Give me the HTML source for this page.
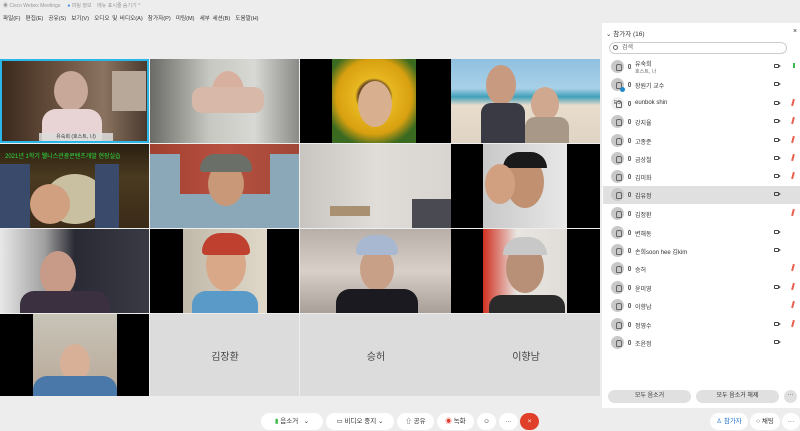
<!DOCTYPE html>
<html><head><meta charset="utf-8"><style>
*{margin:0;padding:0;box-sizing:border-box}
body{width:800px;height:431px;background:#ededed;font-family:"Liberation Sans","Noto Sans CJK KR",sans-serif;position:relative;overflow:hidden;color:#333}
.a{position:absolute}
.t{position:absolute;overflow:hidden}
.f{position:absolute;border-radius:50%}
.row{position:absolute;left:603px;width:197px;height:18px;font-size:6px;color:#333}
.av{position:absolute;left:8px;top:2px;width:13px;height:13px;border-radius:50%;background:#c8c8c8}
.av:after{content:"";position:absolute;left:4.5px;top:3.5px;width:4px;height:5px;border:1px solid #666;border-radius:2px 2px 1px 1px}
.mi{position:absolute;left:25px;top:6px;width:3px;height:5px;border:1px solid #666;border-radius:2px}
.nm{position:absolute;left:32px;top:5px}
.cam{position:absolute;left:171px;top:6px;width:5px;height:4px;border:1px solid #444;border-radius:1px}
.cam:after{content:"";position:absolute;left:4px;top:0;border-left:2px solid #444;border-top:1px solid transparent;border-bottom:1px solid transparent}
.rm{position:absolute;left:189px;top:4px;width:2px;height:7px;background:#e8604c;transform:rotate(15deg)}
.btn{position:absolute;top:413px;height:17px;background:#fff;border-radius:9px;font-size:6.5px;line-height:17px;text-align:center;color:#333}
.nt{position:absolute;width:150px;text-align:center;font-size:10px;color:#444;top:348px}
</style></head><body>
<div class="a" style="left:3px;top:2px;font-size:5px;color:#999">◉ Cisco Webex Meetings &nbsp;&nbsp;&nbsp; <span style="color:#3a8de0">●</span> 미팅 정보 &nbsp;&nbsp; 메뉴 표시줄 숨기기 ^</div>
<div class="a" style="left:3px;top:14px;font-size:5.6px;color:#333;word-spacing:1px;white-space:nowrap">파일(F) &nbsp;편집(E) &nbsp;공유(S) &nbsp;보기(V) &nbsp;오디오 및 비디오(A) &nbsp;참가자(P) &nbsp;미팅(M) &nbsp;세부 세션(B) &nbsp;도움말(H)</div>

<!-- row1 -->
<div class="t" style="left:0;top:59px;width:149px;height:84px;background:linear-gradient(90deg,#3b2a1e,#6b5240 40%,#8a7360 70%,#4a3a2e);border:2px solid #29b6e8">
<div class="a" style="left:110px;top:10px;width:34px;height:40px;background:#b8a89a"></div>
<div class="f" style="left:52px;top:10px;width:34px;height:40px;background:#c8a898"></div>
<div class="a" style="left:40px;top:48px;width:60px;height:40px;background:#e8d4d4;border-radius:14px 14px 0 0"></div>
<div class="a" style="left:37px;top:72px;width:74px;height:9px;background:rgba(220,220,220,.85);font-size:5px;text-align:center;line-height:9px">유숙희 (호스트, 나)</div></div>
<div class="t" style="left:150px;top:59px;width:149px;height:84px;background:linear-gradient(90deg,#6a6a66,#c8c8c2 40%,#d8d8d4 70%,#8a8a86)">
<div class="f" style="left:62px;top:12px;width:32px;height:42px;background:#d8b0a0"></div>
<div class="a" style="left:42px;top:28px;width:72px;height:26px;background:#d8b8a8;border-radius:10px"></div></div>
<div class="t" style="left:300px;top:59px;width:151px;height:84px;background:#000">
<div class="a" style="left:32px;top:0;width:84px;height:84px;background:radial-gradient(circle at 50% 45%,#6a4a20 25%,#e8b820 30%,#d8a010 60%,#3a6a20 80%)"></div>
<div class="f" style="left:58px;top:22px;width:34px;height:46px;background:#d8b090"></div></div>
<div class="t" style="left:451px;top:59px;width:149px;height:84px;background:linear-gradient(180deg,#90c0e0 0,#a8d0e8 35%,#40a0b8 45%,#e8dccc 55%,#e0d4c4)">
<div class="f" style="left:35px;top:6px;width:30px;height:40px;background:#c89a80"></div>
<div class="a" style="left:30px;top:44px;width:44px;height:40px;background:#3a3a44;border-radius:10px 10px 0 0"></div>
<div class="f" style="left:80px;top:28px;width:28px;height:34px;background:#d0a890"></div>
<div class="a" style="left:74px;top:58px;width:44px;height:30px;background:#a89888;border-radius:10px 10px 0 0"></div></div>
<!-- row2 -->
<div class="t" style="left:0;top:144px;width:149px;height:84px;background:linear-gradient(180deg,#2a2010,#4a3a20 40%,#3a2a18)">
<div class="a" style="left:5px;top:7px;font-size:6px;color:#2ce040;white-space:nowrap">2021년 1학기 웰니스관광콘텐츠개발 현장실습</div>
<div class="f" style="left:45px;top:30px;width:60px;height:50px;background:#c8c0a0"></div>
<div class="f" style="left:30px;top:40px;width:40px;height:40px;background:#d0a080"></div>
<div class="a" style="left:0;top:20px;width:30px;height:64px;background:#3a4a6a"></div>
<div class="a" style="left:95px;top:20px;width:24px;height:64px;background:#3a4a6a"></div></div>
<div class="t" style="left:150px;top:144px;width:149px;height:84px;background:linear-gradient(90deg,#a04030,#b85040 50%,#a04838)">
<div class="a" style="left:0;top:50px;width:149px;height:34px;background:#8aa8b8"></div>
<div class="f" style="left:58px;top:18px;width:36px;height:44px;background:#c89878"></div>
<div class="a" style="left:50px;top:10px;width:52px;height:18px;background:#6a7068;border-radius:20px 20px 4px 4px"></div>
<div class="a" style="left:0;top:10px;width:30px;height:74px;background:#8aa8b8"></div>
<div class="a" style="left:120px;top:10px;width:29px;height:74px;background:#8aa8b8"></div></div>
<div class="t" style="left:300px;top:144px;width:151px;height:84px;background:linear-gradient(90deg,#c8c4c0,#e0dcd8 50%,#d8d4d0)">
<div class="a" style="left:112px;top:55px;width:39px;height:29px;background:#4a4a52"></div>
<div class="a" style="left:30px;top:62px;width:40px;height:10px;background:#a89070"></div></div>
<div class="t" style="left:451px;top:144px;width:149px;height:84px;background:#000">
<div class="a" style="left:32px;top:0;width:84px;height:84px;background:linear-gradient(90deg,#c8c8c8,#e8e8e8)"></div>
<div class="f" style="left:55px;top:12px;width:38px;height:52px;background:#c09070"></div>
<div class="a" style="left:52px;top:8px;width:44px;height:16px;background:#1a1a1a;border-radius:20px 20px 0 0"></div>
<div class="f" style="left:34px;top:20px;width:30px;height:40px;background:#d0a080"></div></div>
<!-- row3 -->
<div class="t" style="left:0;top:229px;width:149px;height:84px;background:linear-gradient(90deg,#e8e8e8,#a0a0a0 30%,#2a2a34 50%,#3a3a44)">
<div class="f" style="left:40px;top:22px;width:36px;height:46px;background:#c89a88"></div>
<div class="a" style="left:20px;top:62px;width:90px;height:22px;background:#3a3040;border-radius:14px 14px 0 0"></div></div>
<div class="t" style="left:150px;top:229px;width:149px;height:84px;background:#000">
<div class="a" style="left:33px;top:0;width:84px;height:84px;background:linear-gradient(90deg,#c0b8a8,#e0d8c8)"></div>
<div class="f" style="left:56px;top:10px;width:40px;height:52px;background:#d8a888"></div>
<div class="a" style="left:52px;top:4px;width:48px;height:22px;background:#c04030;border-radius:20px 20px 4px 4px"></div>
<div class="a" style="left:42px;top:62px;width:66px;height:22px;background:#5a9ac8;border-radius:14px 14px 0 0"></div></div>
<div class="t" style="left:300px;top:229px;width:151px;height:84px;background:linear-gradient(180deg,#b8b0a8,#d8d0c8 50%,#a8a098)">
<div class="f" style="left:60px;top:18px;width:34px;height:44px;background:#c8a088"></div>
<div class="a" style="left:56px;top:6px;width:42px;height:20px;background:#a8b8d0;border-radius:20px 20px 4px 4px"></div>
<div class="a" style="left:36px;top:60px;width:82px;height:24px;background:#1a1a20;border-radius:14px 14px 0 0"></div></div>
<div class="t" style="left:451px;top:229px;width:149px;height:84px;background:#000">
<div class="a" style="left:32px;top:0;width:84px;height:84px;background:linear-gradient(90deg,#d03020,#e8e4e0 40%,#e0dcd8)"></div>
<div class="f" style="left:55px;top:14px;width:38px;height:50px;background:#b89078"></div>
<div class="a" style="left:52px;top:8px;width:44px;height:18px;background:#c8c8c8;border-radius:20px 20px 0 0"></div>
<div class="a" style="left:38px;top:66px;width:76px;height:18px;background:#2a2a2a;border-radius:12px 12px 0 0"></div></div>
<!-- row4 -->
<div class="t" style="left:0;top:314px;width:149px;height:82px;background:#000">
<div class="a" style="left:33px;top:0;width:84px;height:82px;background:linear-gradient(180deg,#c8c4b8,#b8a898)"></div>
<div class="f" style="left:60px;top:30px;width:30px;height:38px;background:#d8b098"></div>
<div class="a" style="left:33px;top:62px;width:84px;height:20px;background:#4a78a8;border-radius:14px 14px 0 0"></div></div>
<div class="t" style="left:150px;top:314px;width:149px;height:82px;background:#dcdcdc"></div>
<div class="t" style="left:300px;top:314px;width:151px;height:82px;background:#dcdcdc"></div>
<div class="t" style="left:451px;top:314px;width:149px;height:82px;background:#dcdcdc"></div>
<div class="nt" style="left:150px">김장환</div>
<div class="nt" style="left:301px">승허</div>
<div class="nt" style="left:451px">이향남</div>

<!-- panel -->
<div class="a" style="left:602px;top:23px;width:198px;height:385px;background:#fff"></div>
<div class="a" style="left:606px;top:28px;font-size:6.5px">⌄ 참가자 (16)</div>
<div class="a" style="left:793px;top:28px;font-size:7px">×</div>
<div class="a" style="left:609px;top:42px;width:178px;height:12px;border:1px solid #ccc;border-radius:6px;font-size:6px;padding-left:12px;line-height:10px;color:#666">검색</div>
<div class="a" style="left:613px;top:45px;width:5px;height:5px;border:1px solid #666;border-radius:50%"></div>

<div class="row" style="top:58px"><div class="av"></div><div class="mi"></div><div class="nm" style="top:1px">유숙희<br><span style="font-size:5px;color:#666">호스트, 나</span></div><div class="cam"></div><div class="a" style="left:190px;top:5px;width:2px;height:5px;background:#3cba4c"></div></div>
<div class="row" style="top:76px"><div class="av"></div><div class="mi"></div><div class="nm">장원기 교수</div><div class="cam"></div><div class="a" style="left:17px;top:11px;width:5px;height:5px;border-radius:50%;background:#1e88c8"></div></div>
<div class="row" style="top:95px"><div class="av" style="background:#eee;font-size:5px;text-align:center;line-height:13px">ES</div><div class="mi"></div><div class="nm">eunbok shin</div><div class="cam"></div><div class="rm"></div></div>
<div class="row" style="top:113px"><div class="av"></div><div class="mi"></div><div class="nm">강지율</div><div class="cam"></div><div class="rm"></div></div>
<div class="row" style="top:132px"><div class="av"></div><div class="mi"></div><div class="nm">고종준</div><div class="cam"></div><div class="rm"></div></div>
<div class="row" style="top:150px"><div class="av"></div><div class="mi"></div><div class="nm">금상철</div><div class="cam"></div><div class="rm"></div></div>
<div class="row" style="top:168px"><div class="av"></div><div class="mi"></div><div class="nm">김미화</div><div class="cam"></div><div class="rm"></div></div>
<div class="row" style="top:186px;background:#e0e0e0"><div class="av"></div><div class="mi"></div><div class="nm">김유정</div><div class="cam"></div></div>
<div class="row" style="top:205px"><div class="av"></div><div class="mi"></div><div class="nm">김정환</div><div class="rm"></div></div>
<div class="row" style="top:224px"><div class="av"></div><div class="mi"></div><div class="nm">변해동</div><div class="cam"></div></div>
<div class="row" style="top:242px"><div class="av"></div><div class="mi"></div><div class="nm">손희soon hee 김kim</div><div class="cam"></div></div>
<div class="row" style="top:260px"><div class="av"></div><div class="mi"></div><div class="nm">승허</div><div class="rm"></div></div>
<div class="row" style="top:279px"><div class="av"></div><div class="mi"></div><div class="nm">윤미영</div><div class="cam"></div><div class="rm"></div></div>
<div class="row" style="top:297px"><div class="av"></div><div class="mi"></div><div class="nm">이향남</div><div class="rm"></div></div>
<div class="row" style="top:316px"><div class="av"></div><div class="mi"></div><div class="nm">정영수</div><div class="cam"></div><div class="rm"></div></div>
<div class="row" style="top:334px"><div class="av"></div><div class="mi"></div><div class="nm">조윤정</div><div class="cam"></div></div>

<div class="a" style="left:608px;top:390px;width:83px;height:13px;background:#e0e0e0;border-radius:7px;font-size:6px;text-align:center;line-height:13px">모두 음소거</div>
<div class="a" style="left:696px;top:390px;width:83px;height:13px;background:#e0e0e0;border-radius:7px;font-size:6px;text-align:center;line-height:13px">모두 음소거 해제</div>
<div class="a" style="left:784px;top:390px;width:13px;height:13px;background:#e0e0e0;border-radius:50%;font-size:6px;text-align:center;line-height:11px">···</div>

<div class="btn" style="left:261px;width:62px"><span style="color:#3cba4c">▮</span> 음소거 &nbsp;&nbsp;⌄</div>
<div class="btn" style="left:326px;width:68px">▭ 비디오 중지 ⌄</div>
<div class="btn" style="left:397px;width:37px">⇧ 공유</div>
<div class="btn" style="left:437px;width:37px"><span style="color:#e04030">◉</span> 녹화</div>
<div class="btn" style="left:477px;width:19px">☺</div>
<div class="btn" style="left:499px;width:19px">···</div>
<div class="btn" style="left:520px;width:19px;background:#e0402a;color:#fff">×</div>
<div class="btn" style="left:710px;width:38px;color:#1e6ec8">♙ 참가자</div>
<div class="btn" style="left:750px;width:30px">○ 채팅</div>
<div class="btn" style="left:782px;width:18px">···</div>
</body></html>
